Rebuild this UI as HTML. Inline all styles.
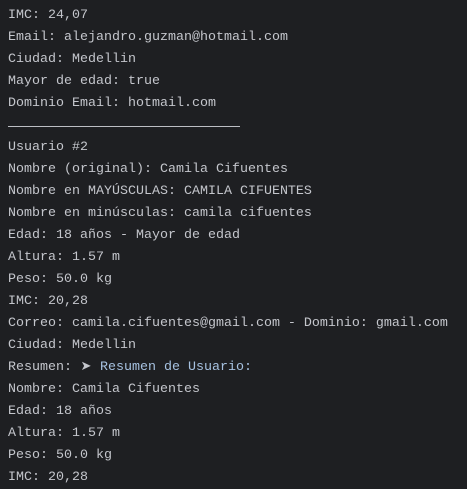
<!DOCTYPE html>
<html><head><meta charset="utf-8"><style>
html,body{margin:0;padding:0;background:#1e1f22;width:467px;height:480px;overflow:hidden}
.c{position:absolute;left:8px;top:-17px;font-family:"Liberation Mono","DejaVu Sans Mono",monospace;font-size:13.33px;line-height:22px;color:#c4c6cc;white-space:pre}
.sep{display:block;height:22px;position:relative}
.sep:after{content:"";position:absolute;left:0;top:11px;width:232px;height:1px;background:#bcbec4}
.b{color:#a6c1e0}
.a{font-family:"DejaVu Sans",sans-serif;font-size:13px;line-height:0;display:inline-block;width:12px;text-align:center}
</style></head><body>
<div class="c">Peso: 75.0 kg
IMC: 24,07
Email: alejandro.guzman@hotmail.com
Ciudad: Medellin
Mayor de edad: true
Dominio Email: hotmail.com
<span class="sep"></span>Usuario #2
Nombre (original): Camila Cifuentes
Nombre en MAYÚSCULAS: CAMILA CIFUENTES
Nombre en minúsculas: camila cifuentes
Edad: 18 años - Mayor de edad
Altura: 1.57 m
Peso: 50.0 kg
IMC: 20,28
Correo: camila.cifuentes@gmail.com - Dominio: gmail.com
Ciudad: Medellin
Resumen: <span class="a">➤</span> <span class="b">Resumen de Usuario:</span>
Nombre: Camila Cifuentes
Edad: 18 años
Altura: 1.57 m
Peso: 50.0 kg
IMC: 20,28</div>
</body></html>
